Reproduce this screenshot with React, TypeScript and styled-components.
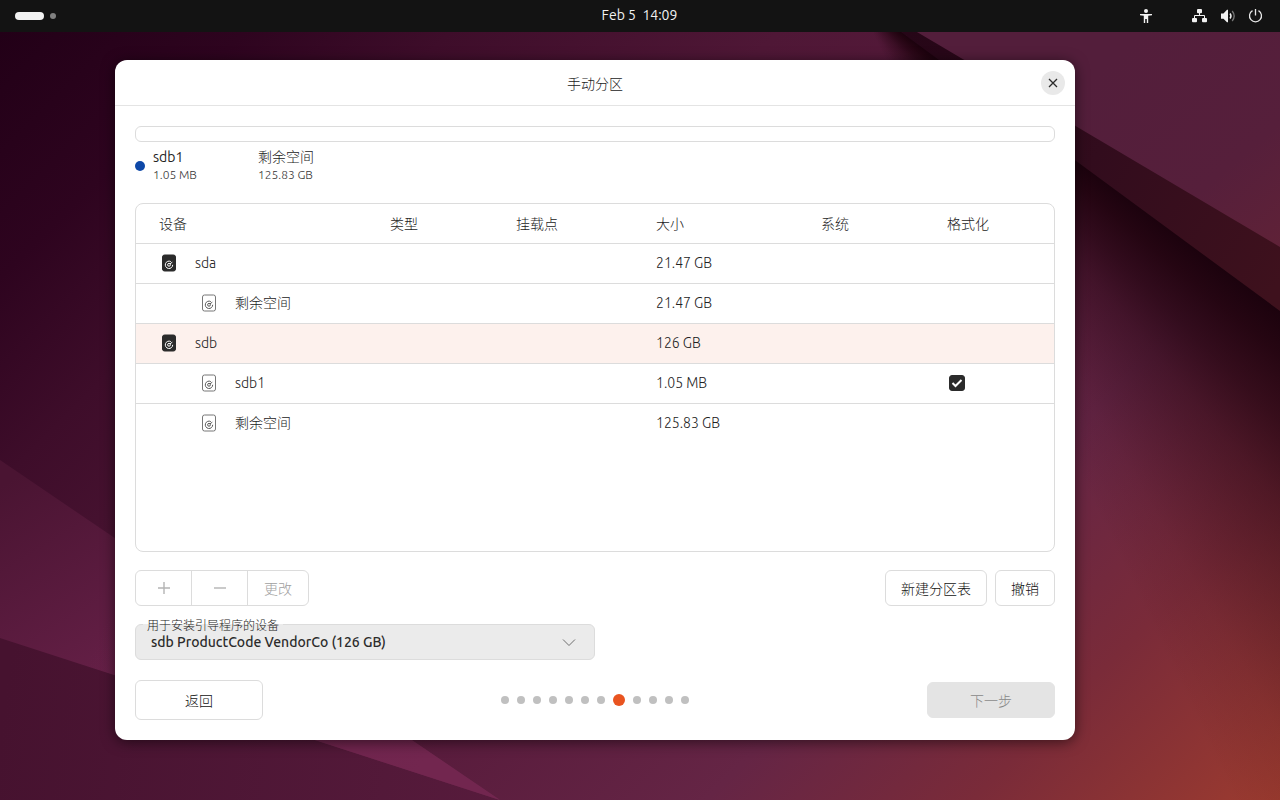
import React, { useState } from "react";
import styled, { createGlobalStyle, css } from "styled-components";

const font = `Ubuntu, "Noto Sans", "Noto Sans CJK SC", sans-serif`;
const line = "#dcdcdc";
const ink = "#222222";

const GlobalStyle = createGlobalStyle`
  *, *::before, *::after { box-sizing: border-box; }
  html, body { margin: 0; padding: 0; }
  body, button, select, input { font-family: ${font}; font-size: 14px; color: ${ink}; }
`;

const Screen = styled.div`
  display: flex;
  flex-direction: column;
  min-height: 100vh;
  line-height: 20px;
`;

/* ---------- top bar ---------- */

const TopBar = styled.header`
  display: grid;
  grid-template-columns: 1fr auto 1fr;
  align-items: center;
  height: 32px;
  padding: 0 16px 0 15px;
  background: #131313;
  color: #f2f2f2;
`;

const BarButton = styled.button`
  display: flex;
  align-items: center;
  gap: 6px;
  padding: 0;
  border: 0;
  background: none;
  color: #f2f2f2;
  cursor: pointer;
`;

const WorkspacePill = styled.span`
  width: 29px;
  height: 8px;
  border-radius: 4px;
  background: #f2f2f2;
`;

const WorkspaceDot = styled.span`
  width: 6px;
  height: 6px;
  border-radius: 50%;
  background: #808080;
`;

const Clock = styled.time`
  white-space: pre;
  padding-bottom: 2px;
`;

const StatusArea = styled.div`
  display: flex;
  justify-content: flex-end;
  gap: 38px;
`;

const StatusGroup = styled(BarButton)`
  gap: 12px;
`;

/* ---------- desktop ---------- */

const Desktop = styled.main`
  position: relative;
  isolation: isolate;
  flex: 1;
  display: flex;
  padding: 28px 205px 60px 115px;
  background: linear-gradient(
    135deg,
    #220017 0%,
    #2e041f 12%,
    #3e0d2a 22%,
    #4f1736 38%,
    #581b3c 55%,
    #652545 72%,
    #7a2b39 85%,
    #9c3b2f 100%
  );
`;

const Wallpaper = styled.div`
  position: absolute;
  inset: 0;
  z-index: -1;
  overflow: hidden;
  background: conic-gradient(
    from 0deg at 67% -32px,
    transparent 126deg,
    rgba(27, 2, 13, 1) 126deg,
    rgba(30, 2, 13, 0.9) 130deg,
    rgba(30, 2, 13, 0.7) 135deg,
    rgba(30, 2, 13, 0.46) 140deg,
    rgba(30, 2, 13, 0.28) 145deg,
    rgba(30, 2, 13, 0.1) 150deg,
    rgba(30, 2, 13, 0) 155deg
  );

  svg {
    display: block;
    width: 100%;
    height: 100%;
  }
`;

/* ---------- dialog ---------- */

const Dialog = styled.section`
  flex: 1;
  display: flex;
  flex-direction: column;
  min-width: 0;
  border-radius: 12px;
  background: #ffffff;
  box-shadow: 0 2px 14px rgba(0, 0, 0, 0.55);
`;

const TitleBar = styled.header`
  display: grid;
  grid-template-columns: 1fr auto 1fr;
  align-items: center;
  height: 46px;
  padding: 0 10px;
  border-bottom: 1px solid #e4e4e4;
`;

const Title = styled.h1`
  grid-column: 2;
  margin: 0;
  padding-top: 2px;
  font-size: 14px;
  font-weight: 300;
`;

const CloseButton = styled.button`
  justify-self: end;
  display: grid;
  place-items: center;
  width: 24px;
  height: 24px;
  padding: 0;
  border: 0;
  border-radius: 50%;
  background: #e9e9e9;
  cursor: pointer;
`;

const Content = styled.div`
  flex: 1;
  display: flex;
  flex-direction: column;
  padding: 20px;
`;

const StorageBar = styled.div`
  height: 16px;
  border: 1px solid ${line};
  border-radius: 6px;
`;

const Legend = styled.ul`
  display: flex;
  gap: 40px;
  margin: 0;
  padding: 6px 0 20px;
  list-style: none;
`;

const LegendItem = styled.li`
  display: flex;
  align-items: center;
  gap: 8px;
  min-width: 65px;
`;

const Swatch = styled.span<{ $color: string }>`
  width: 10px;
  height: 10px;
  border-radius: 50%;
  background: ${(p) => p.$color};
`;

const LegendText = styled.div`
  display: flex;
  flex-direction: column;
`;

const LegendName = styled.span<{ $light?: boolean }>`
  height: 19px;
  line-height: 19px;
  font-weight: ${(p) => (p.$light ? 300 : 400)};
`;

const LegendSize = styled.span`
  height: 16px;
  line-height: 16px;
  font-size: 12px;
  font-weight: 300;
  color: #333333;
`;

const TableFrame = styled.div`
  flex: 1;
  min-height: 240px;
  overflow: hidden;
  border: 1px solid ${line};
  border-radius: 8px;
`;

const Table = styled.table`
  width: 100%;
  table-layout: fixed;
  border-collapse: separate;
  border-spacing: 0;
  font-weight: 300;
`;

const Column = styled.col<{ $width?: number }>`
  ${(p) => p.$width && css`width: ${p.$width}px;`}
`;

const HeadCell = styled.th`
  height: 40px;
  padding: 0 0 0 23px;
  border-bottom: 1px solid ${line};
  text-align: left;
  font-weight: 300;
`;

const Cell = styled.td`
  height: 40px;
  padding: 0 0 2px 23px;
  border-bottom: 1px solid ${line};
`;

const Row = styled.tr<{ $selected: boolean }>`
  background: ${(p) => (p.$selected ? "#fdf1ed" : "transparent")};

  &:last-child ${Cell} {
    border-bottom: 0;
  }
`;

const DeviceName = styled.div<{ $nested: boolean }>`
  display: flex;
  align-items: center;
  gap: 16px;
  padding-left: ${(p) => (p.$nested ? 40 : 0)}px;
`;

const CheckWrap = styled.label`
  display: grid;
  width: 20px;
  height: 20px;
  place-items: center;

  > * {
    grid-area: 1 / 1;
  }

  svg {
    pointer-events: none;
  }
`;

const CheckInput = styled.input`
  appearance: none;
  width: 16px;
  height: 16px;
  margin: 0;
  border: 1px solid #2b2b2b;
  border-radius: 3px;
  background: #ffffff;

  &:checked {
    background: #2b2b2b;
  }
`;

const Toolbar = styled.div`
  display: flex;
  justify-content: space-between;
  margin-top: 18px;
`;

const ButtonRow = styled.div`
  display: flex;
  gap: 8px;
`;

const SegmentGroup = styled.div`
  display: flex;
  height: 36px;
  border: 1px solid ${line};
  border-radius: 6px;
`;

const Segment = styled.button<{ $text?: boolean }>`
  box-sizing: content-box;
  display: grid;
  place-items: center;
  width: ${(p) => (p.$text ? "auto" : "55px")};
  padding: 0 ${(p) => (p.$text ? 16 : 0)}px;
  border: 0;
  background: none;
  color: #a0a0a0;
  font-weight: 300;

  & + & {
    border-left: 1px solid ${line};
  }
`;

const Button = styled.button<{ $wide?: boolean; $filled?: boolean }>`
  height: 36px;
  padding: 0 15px;
  border: 1px solid ${line};
  border-radius: 6px;
  background: #ffffff;
  color: #111111;
  font-weight: 300;
  ${(p) =>
    p.$wide &&
    css`
      width: 128px;
      height: 40px;
    `}
  ${(p) =>
    p.$filled &&
    css`
      height: 36px;
      border-color: #e4e4e4;
      background: #e4e4e4;
      color: #888888;
    `}
`;

const SelectField = styled.div`
  position: relative;
  width: 50%;
  height: 36px;
  margin-top: 18px;

  svg {
    position: absolute;
    right: 19px;
    top: 14px;
    pointer-events: none;
  }
`;

const SelectLabel = styled.label`
  position: absolute;
  left: 8px;
  top: -6px;
  height: 16px;
  padding: 0 4px;
  line-height: 16px;
  font-size: 12px;
  font-weight: 300;
  background: linear-gradient(#ffffff 6px, #ebebeb 6px);
`;

const Select = styled.select`
  appearance: none;
  width: 100%;
  height: 100%;
  padding: 0 40px 0 15px;
  border: 1px solid ${line};
  border-radius: 6px;
  background: #ebebeb;
  color: #2b2b2b;
  font-weight: 500;
`;

const Footer = styled.footer`
  display: flex;
  align-items: center;
  justify-content: space-between;
  margin-top: 20px;
`;

const Steps = styled.ol`
  display: flex;
  align-items: center;
  gap: 8px;
  margin: 0;
  padding: 0;
  list-style: none;
`;

const Step = styled.li<{ $current: boolean }>`
  width: ${(p) => (p.$current ? 12 : 8)}px;
  height: ${(p) => (p.$current ? 12 : 8)}px;
  border-radius: 50%;
  background: ${(p) => (p.$current ? "#e95420" : "#c0c0c0")};
`;

/* ---------- icons ---------- */

const AccessibilityIcon = () => (
  <svg width="16" height="16" viewBox="0 0 16 16" fill="#f2f2f2" aria-hidden="true">
    <circle cx="8" cy="3" r="2" />
    <path d="M2 6h12v1.200l-3.800.600V15H8.800v-4H7.200v4H5.800V7.800L2 7.200z" />
  </svg>
);

const NetworkIcon = () => (
  <svg width="16" height="16" viewBox="0 0 16 16" fill="#f2f2f2" aria-hidden="true">
    <rect x="5" y="1" width="5" height="4.200" rx="1" />
    <rect x="0" y="10" width="5" height="4.200" rx="1" />
    <rect x="10" y="10" width="5" height="4.200" rx="1" />
    <path d="M7.500 5v2.500M2.500 10.500V7.500H12.500V10.500" fill="none" stroke="#f2f2f2" />
  </svg>
);

const VolumeIcon = () => (
  <svg width="16" height="16" viewBox="0 0 16 16" fill="none" aria-hidden="true">
    <path d="M1 5.500h2.500L7 1.800h1v12.400H7L3.500 10.700H1z" fill="#f2f2f2" />
    <path d="M10 5.500q2 2.500 0 5" stroke="#f2f2f2" strokeWidth="1.400" />
    <path d="M12.200 3q4 5 0 10" stroke="#777777" strokeWidth="1.300" />
  </svg>
);

const PowerIcon = () => (
  <svg width="16" height="16" viewBox="0 0 16 16" fill="none" stroke="#e6e6e6" strokeWidth="1.300" aria-hidden="true">
    <path d="M4.500 2.600a6 6 0 1 0 6 0" />
    <path d="M7.500 1v6.500" />
  </svg>
);

const CloseIcon = () => (
  <svg width="10" height="10" viewBox="0 0 10 10" fill="none" stroke="#2b2b2b" strokeWidth="1.300" aria-hidden="true">
    <path d="M1 1l8 8M9 1l-8 8" />
  </svg>
);

const DriveIcon = ({ solid }: { solid: boolean }) => {
  const stroke = solid ? "#ffffff" : "#5a5a5a";
  return (
    <svg width="20" height="20" viewBox="0 0 20 20" fill="none" aria-hidden="true">
      <rect
        x="3.500"
        y="2"
        width="13"
        height="16"
        rx="2"
        fill={solid ? "#2b2b2b" : "none"}
        stroke={solid ? "#2b2b2b" : "#777777"}
      />
      <path d="M11.800 8.600A3.700 3.700 0 1 0 13.700 11.800" stroke={stroke} />
      <circle cx="10" cy="11.800" r="1.400" stroke={stroke} />
      <path d="M11 10.800l2.300-1.600" stroke={stroke} />
    </svg>
  );
};

const CheckIcon = () => (
  <svg width="16" height="16" viewBox="0 0 16 16" fill="none" stroke="#ffffff" strokeWidth="2" aria-hidden="true">
    <path d="M3.500 8l3 3 6-6" />
  </svg>
);

const PlusIcon = () => (
  <svg width="14" height="14" viewBox="0 0 14 14" stroke="#b4b4b4" strokeWidth="1.400" aria-hidden="true">
    <path d="M1 7h12M7 1v12" />
  </svg>
);

const MinusIcon = () => (
  <svg width="14" height="14" viewBox="0 0 14 14" stroke="#b4b4b4" strokeWidth="1.400" aria-hidden="true">
    <path d="M1 7h12" />
  </svg>
);

const ChevronIcon = () => (
  <svg width="14" height="10" viewBox="0 0 14 10" fill="none" stroke="#6e6e6e" aria-hidden="true">
    <path d="M1 1.500l6 6 6-6" />
  </svg>
);

const WallpaperArt = () => (
  <svg viewBox="0 0 1280 768" preserveAspectRatio="none" aria-hidden="true">
    <defs>
      <linearGradient id="facet" gradientUnits="userSpaceOnUse" x1="40" y1="430" x2="170" y2="640">
        <stop offset="0" stopColor="#4a1432" />
        <stop offset="1" stopColor="#682149" />
      </linearGradient>
      <linearGradient id="facetTip" gradientUnits="userSpaceOnUse" x1="100" y1="600" x2="420" y2="740">
        <stop offset="0" stopColor="#72264f" stopOpacity="0" />
        <stop offset="1" stopColor="#72264f" />
      </linearGradient>
      <linearGradient id="ground" gradientUnits="userSpaceOnUse" x1="0" y1="700" x2="500" y2="768">
        <stop offset="0" stopColor="#46122f" />
        <stop offset="1" stopColor="#571b3c" />
      </linearGradient>
      <linearGradient id="sky" gradientUnits="userSpaceOnUse" x1="1120" y1="20" x2="1290" y2="220">
        <stop offset="0" stopColor="#531e3b" />
        <stop offset="0.600" stopColor="#561f3b" />
        <stop offset="1" stopColor="#602237" />
      </linearGradient>
      <linearGradient id="ridge" gradientUnits="userSpaceOnUse" x1="910" y1="0" x2="1280" y2="250">
        <stop offset="0" stopColor="#260617" />
        <stop offset="0.500" stopColor="#320c1d" />
        <stop offset="1" stopColor="#3e111d" />
      </linearGradient>
    </defs>
    <path d="M0 606L500 768H0z" fill="url(#ground)" />
    <path d="M0 428L500 768L0 606z" fill="url(#facet)" />
    <path d="M0 428L500 768L0 606z" fill="url(#facetTip)" />
    <path d="M901 0L1280 279V0z" fill="url(#ridge)" />
    <path d="M917 0L1280 215V0z" fill="url(#sky)" />
  </svg>
);

/* ---------- data ---------- */

type Device = { name: string; size: string; nested: boolean; format?: boolean };

const devices: Device[] = [
  { name: "sda", size: "21.47 GB", nested: false },
  { name: "剩余空间", size: "21.47 GB", nested: true },
  { name: "sdb", size: "126 GB", nested: false },
  { name: "sdb1", size: "1.05 MB", nested: true, format: true },
  { name: "剩余空间", size: "125.83 GB", nested: true },
];

const columns: { label: string; width?: number }[] = [
  { label: "设备" },
  { label: "类型", width: 126 },
  { label: "挂载点", width: 140 },
  { label: "大小", width: 165 },
  { label: "系统", width: 126 },
  { label: "格式化", width: 130 },
];

const stepCount = 12;
const currentStep = 7;

export default function App() {
  const [selected, setSelected] = useState(2);
  const [format, setFormat] = useState(true);

  return (
    <Screen lang="zh-CN">
      <GlobalStyle />
      <TopBar>
        <BarButton aria-label="工作区">
          <WorkspacePill />
          <WorkspaceDot />
        </BarButton>
        <Clock>{"Feb 5  14:09"}</Clock>
        <StatusArea>
          <BarButton aria-label="辅助功能">
            <AccessibilityIcon />
          </BarButton>
          <StatusGroup aria-label="系统菜单">
            <NetworkIcon />
            <VolumeIcon />
            <PowerIcon />
          </StatusGroup>
        </StatusArea>
      </TopBar>

      <Desktop>
        <Wallpaper>
          <WallpaperArt />
        </Wallpaper>
        <Dialog aria-labelledby="dialog-title">
          <TitleBar>
            <Title id="dialog-title">手动分区</Title>
            <CloseButton aria-label="关闭">
              <CloseIcon />
            </CloseButton>
          </TitleBar>

          <Content>
            <StorageBar />
            <Legend>
              <LegendItem>
                <Swatch $color="#0e48a8" />
                <LegendText>
                  <LegendName>sdb1</LegendName>
                  <LegendSize>1.05 MB</LegendSize>
                </LegendText>
              </LegendItem>
              <LegendItem>
                <Swatch $color="#ffffff" />
                <LegendText>
                  <LegendName $light>剩余空间</LegendName>
                  <LegendSize>125.83 GB</LegendSize>
                </LegendText>
              </LegendItem>
            </Legend>

            <TableFrame>
              <Table>
                <colgroup>
                  {columns.map((c) => (
                    <Column key={c.label} $width={c.width} />
                  ))}
                </colgroup>
                <thead>
                  <tr>
                    {columns.map((c) => (
                      <HeadCell key={c.label} scope="col">
                        {c.label}
                      </HeadCell>
                    ))}
                  </tr>
                </thead>
                <tbody>
                  {devices.map((d, i) => (
                    <Row key={i} $selected={i === selected} onClick={() => setSelected(i)}>
                      <Cell>
                        <DeviceName $nested={d.nested}>
                          <DriveIcon solid={!d.nested} />
                          {d.name}
                        </DeviceName>
                      </Cell>
                      <Cell />
                      <Cell />
                      <Cell>{d.size}</Cell>
                      <Cell />
                      <Cell>
                        {d.format && (
                          <CheckWrap>
                            <CheckInput
                              type="checkbox"
                              aria-label="格式化 sdb1"
                              checked={format}
                              onChange={(e) => setFormat(e.target.checked)}
                            />
                            <CheckIcon />
                          </CheckWrap>
                        )}
                      </Cell>
                    </Row>
                  ))}
                </tbody>
              </Table>
            </TableFrame>

            <Toolbar>
              <SegmentGroup>
                <Segment disabled aria-label="添加">
                  <PlusIcon />
                </Segment>
                <Segment disabled aria-label="移除">
                  <MinusIcon />
                </Segment>
                <Segment $text disabled>
                  更改
                </Segment>
              </SegmentGroup>
              <ButtonRow>
                <Button>新建分区表</Button>
                <Button>撤销</Button>
              </ButtonRow>
            </Toolbar>

            <SelectField>
              <Select id="boot-device" defaultValue="sdb">
                <option value="sdb">sdb ProductCode VendorCo (126 GB)</option>
              </Select>
              <SelectLabel htmlFor="boot-device">用于安装引导程序的设备</SelectLabel>
              <ChevronIcon />
            </SelectField>

            <Footer>
              <Button $wide>返回</Button>
              <Steps>
                {Array.from({ length: stepCount }, (_, i) => (
                  <Step key={i} $current={i === currentStep} />
                ))}
              </Steps>
              <Button $wide $filled disabled>
                下一步
              </Button>
            </Footer>
          </Content>
        </Dialog>
      </Desktop>
    </Screen>
  );
}
